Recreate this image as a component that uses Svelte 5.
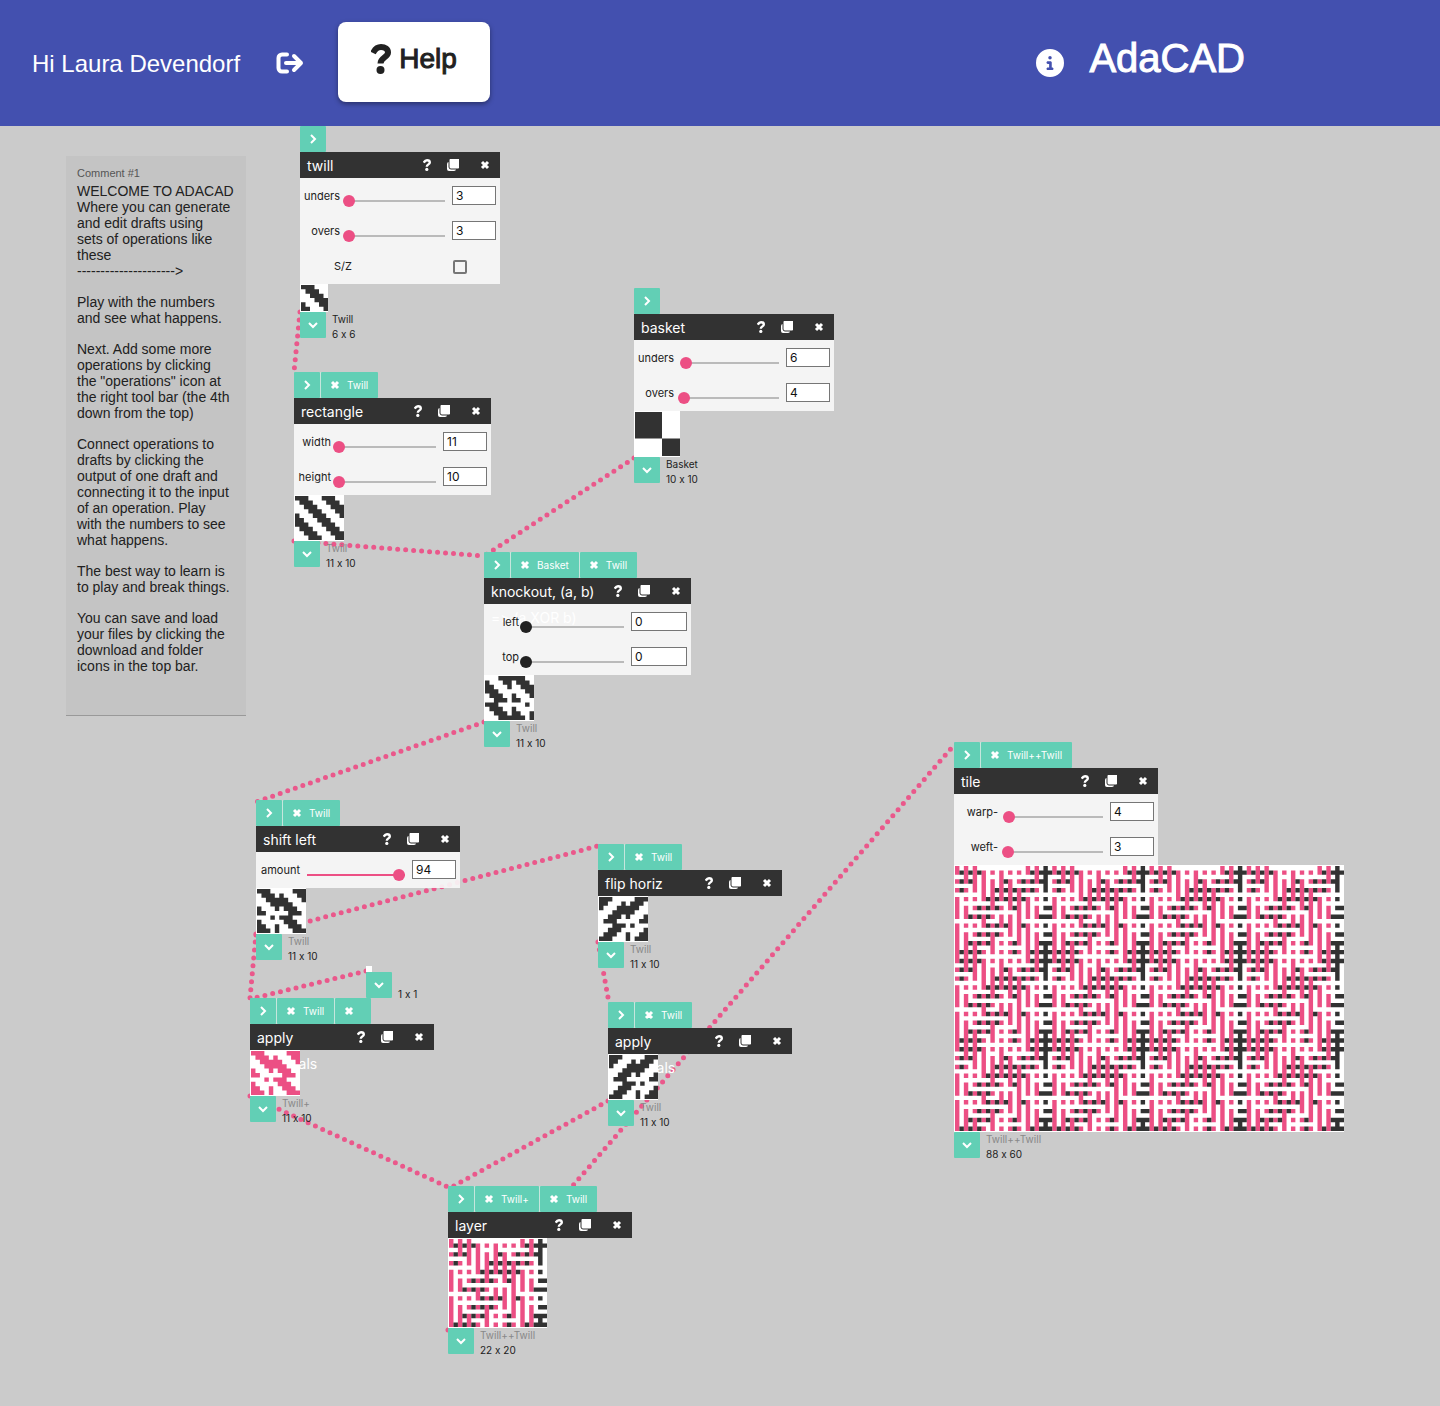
<script>
  const HEADER = 126;
  const CELL = 4.41;
  const DARK = '#323232';
  const PINK = '#ec4f84';
  const WHITE = '#ffffff';

  const grid = (rows, cols, fn) =>
    Array.from({ length: rows }, (_, r) => Array.from({ length: cols }, (_, c) => fn(r, c)));

  // Drafts: each operation transforms the one feeding it.
  const twillAt = (r, c) => (((c - r) % 6) + 6) % 6 < 3;
  const basketAt = (r, c) => c < 10 && c < 6 === r < 6;
  const twill = grid(6, 6, twillAt);
  const rectangle = grid(10, 11, twillAt);
  const basket = grid(10, 10, basketAt);
  const knockout = grid(10, 11, (r, c) => twillAt(r, c) !== basketAt(r, c));
  const shifted = grid(10, 11, (r, c) => knockout[r][(c + 94) % 11]);
  const flipped = grid(10, 11, (r, c) => shifted[r][10 - c]);

  const paint = (draft, colour) => draft.map((row) => row.map((up) => (up ? colour : WHITE)));

  // Two-layer cloth: pink and white warps interlaced with white and dark wefts.
  const layered = grid(20, 22, (r, c) => {
    const top = c % 2 === 0;
    const warp = top ? (c === 20 ? DARK : PINK) : WHITE;
    if (r % 2 === 0) return top && shifted[r / 2][c / 2] ? warp : WHITE;
    if (top) return warp;
    return flipped[(r - 1) / 2][(c - 1) / 2] ? DARK : WHITE;
  });
  const tiled = grid(60, 88, (r, c) => layered[r % 20][c % 22]);

  function runs(cells, colour) {
    let d = '';
    cells.forEach((row, r) => {
      let c = 0;
      while (c < row.length) {
        if (row[c] !== colour) { c++; continue; }
        let end = c;
        while (end < row.length && row[end] === colour) end++;
        d += `M${c} ${r}H${end}V${r + 1}H${c}Z`;
        c = end;
      }
    });
    return d;
  }

  const slider = (label, value, at, wide = false) => ({ label, value, at, wide });

  const nodes = [
    { id: 'twill', x: 300, y: 126, w: 200, title: 'twill', inputs: [], params: [slider('unders', 3, 2), slider('overs', 3, 2)], check: 'S/Z', cells: paint(twill, DARK), name: 'Twill', size: '6 x 6', named: true },
    { id: 'basket', x: 634, y: 288, w: 200, title: 'basket', inputs: [], params: [slider('unders', 6, 5), slider('overs', 4, 3)], cells: paint(basket, DARK), name: 'Basket', size: '10 x 10', named: true },
    { id: 'rectangle', x: 294, y: 372, w: 197, title: 'rectangle', inputs: ['Twill'], params: [slider('width', 11, 1), slider('height', 10, 1)], cells: paint(rectangle, DARK), name: 'Twill', size: '11 x 10' },
    { id: 'knockout', x: 484, y: 552, w: 207, title: 'knockout, (a, b) => (a XOR b)', inputs: ['Basket', 'Twill'], params: [slider('left', 0, 0, true), slider('top', 0, 0, true)], cells: paint(knockout, DARK), name: 'Twill', size: '11 x 10' },
    { id: 'shift', x: 256, y: 800, w: 204, title: 'shift left', inputs: ['Twill'], params: [slider('amount', 94, 94)], cells: paint(shifted, DARK), name: 'Twill', size: '11 x 10' },
    { id: 'flip', x: 598, y: 844, w: 184, title: 'flip horiz', inputs: ['Twill'], params: [], cells: paint(flipped, DARK), name: 'Twill', size: '11 x 10' },
    { id: 'blank', x: 366, y: 966, cells: [[WHITE]], name: '', size: '1 x 1' },
    { id: 'apply-a', x: 250, y: 998, w: 184, title: 'apply materials', inputs: ['Twill', ''], params: [], cells: paint(shifted, PINK), name: 'Twill+', size: '11 x 10' },
    { id: 'apply-b', x: 608, y: 1002, w: 184, title: 'apply materials', inputs: ['Twill'], params: [], cells: paint(flipped, DARK), name: 'Twill', size: '11 x 10' },
    { id: 'layer', x: 448, y: 1186, w: 184, title: 'layer', inputs: ['Twill+', 'Twill'], params: [], cells: layered, name: 'Twill++Twill', size: '22 x 20' },
    { id: 'tile', x: 954, y: 742, w: 204, title: 'tile', inputs: ['Twill++Twill'], params: [slider('warp-', 4, 4), slider('weft-', 3, 3)], cells: tiled, name: 'Twill++Twill', size: '88 x 60' }
  ];

  const links = [
    [300, 312, 294, 372],
    [294, 541, 484, 556],
    [634, 458, 484, 556],
    [484, 722, 256, 802],
    [256, 935, 598, 846],
    [256, 934, 250, 998],
    [366, 971, 250, 999],
    [598, 942, 609, 1003],
    [250, 1096, 450, 1188],
    [608, 1101, 450, 1188],
    [448, 1330, 954, 745]
  ];

  const paragraphs = [
    'WELCOME TO ADACAD\nWhere you can generate\nand edit drafts using\nsets of operations like\nthese\n--------------------->',
    'Play with the numbers\nand see what happens.',
    'Next. Add some more\noperations by clicking\nthe "operations" icon at\nthe right tool bar (the 4th\ndown from the top)',
    'Connect operations to\ndrafts by clicking the\noutput of one draft and\nconnecting it to the input\nof an operation. Play\nwith the numbers to see\nwhat happens.',
    'The best way to learn is\nto play and break things.',
    'You can save and load\nyour files by clicking the\ndownload and folder\nicons in the top bar.'
  ];
</script>

{#snippet question(cls)}
  <svg class={cls} viewBox="0 0 20 30" aria-hidden="true"><path fill="none" stroke="currentColor" stroke-width="6" d="M2 9C4 5 7 3 10 3c4 0 7 2 7 5.500c0 5-7.500 5-7.500 11" /><circle cx="9.500" cy="26" r="4" /></svg>
{/snippet}
{#snippet cross()}
  <svg class="cross" viewBox="0 0 10 10" aria-hidden="true"><path d="M2 2l6 6M8 2l-6 6" /></svg>
{/snippet}

<div class="page">
  <header>
    <span class="greeting">Hi Laura Devendorf</span>
    <button class="bare" aria-label="Sign out">
      <svg class="big" viewBox="0 0 28 22" aria-hidden="true"><path d="M11 2.500H6a3.500 3.500 0 0 0-3.500 3.500v10a3.500 3.500 0 0 0 3.500 3.500h5M10 11h15M18 4l7 7-7 7" /></svg>
    </button>
    <button class="help">{@render question('help-mark')}<span>Help</span></button>
    <button class="bare info" aria-label="About">
      <svg class="round" viewBox="0 0 512 512" aria-hidden="true"><path d="M256 512A256 256 0 1 0 256 0a256 256 0 1 0 0 512zM216 336l24 0 0-64-24 0c-13.300 0-24-10.700-24-24s10.700-24 24-24l48 0c13.300 0 24 10.700 24 24l0 88 8 0c13.300 0 24 10.700 24 24s-10.700 24-24 24l-80 0c-13.300 0-24-10.700-24-24s10.700-24 24-24zm40-208a32 32 0 1 1 0 64 32 32 0 1 1 0-64z" /></svg>
    </button>
    <h1>AdaCAD</h1>
  </header>

  <main>
    <svg class="links" aria-hidden="true">
      {#each links as [x1, y1, x2, y2]}
        <line {x1} y1={y1 - HEADER} {x2} y2={y2 - HEADER} />
      {/each}
    </svg>

    <aside class="comment">
      <div class="caption">Comment #1</div>
      {#each paragraphs as text}
        <p>{text}</p>
      {/each}
    </aside>

    {#each nodes as node (node.id)}
      <section class="node" style:left="{node.x}px" style:top="{node.y - HEADER}px">
        {#if node.title}
          <div class="inlets">
            <button class="port" aria-label="Add input"><svg class="chevron" viewBox="0 0 10 10" aria-hidden="true"><path d="M3 1l4 4-4 4" /></svg></button>
            {#each node.inputs as input}
              <button class="tag" aria-label="Remove input {input}"><span class="x">{@render cross()}</span>{input}</button>
            {/each}
          </div>
          <div class="operation" style:width="{node.w}px">
            <div class="bar">
              <h2>{node.title}</h2>
              <button class="tool" aria-label="Help">{@render question('mark')}</button>
              <button class="tool" aria-label="Duplicate">
                <svg class="copy" viewBox="0 0 12 12" aria-hidden="true"><rect x="0" y="3" width="9" height="9" rx="2" /><rect class="front" x="2" y="-1" width="11" height="11" rx="2" /></svg>
              </button>
              <button class="tool close" aria-label="Delete">{@render cross()}</button>
            </div>
            {#if node.params.length}
              <div class="body">
                {#each node.params as p}
                  {@const id = `${node.id}-${p.label}`}
                  <div class="param">
                    <label for={id}>{p.label}</label>
                    <input type="range" class:zero={p.value === 0} class:full={p.at > 50} min="0" max="100" value={p.at} aria-label="{p.label} slider" />
                    <input type="text" class:wide={p.wide} {id} value={p.value} />
                  </div>
                {/each}
                {#if node.check}
                  <div class="param toggle">
                    <label for="{node.id}-check">{node.check}</label>
                    <input type="checkbox" id="{node.id}-check" />
                  </div>
                {/if}
              </div>
            {/if}
          </div>
        {/if}
        <div class="draft">
          <svg
            viewBox="0 0 {node.cells[0].length} {node.cells.length}"
            preserveAspectRatio="none"
            width={Math.ceil(node.cells[0].length * CELL)}
            height={Math.round(node.cells.length * CELL)}
            aria-hidden="true"
          >
            <path fill={PINK} d={runs(node.cells, PINK)} />
            <path fill={DARK} d={runs(node.cells, DARK)} />
          </svg>
        </div>
        <div class="outlet">
          <button class="port" aria-label="Connect output"><svg class="chevron" viewBox="0 0 10 10" aria-hidden="true"><path d="M1 3l4 4 4-4" /></svg></button>
          <div class="meta">
            <div class="name" class:named={node.named}>{node.name}</div>
            <div>{node.size}</div>
          </div>
        </div>
      </section>
    {/each}
  </main>
</div>

<style>
  :global(body) {
    margin: 0;
    background: #cbcbcb;
  }
  .page {
    min-height: 100vh;
    display: flex;
    flex-direction: column;
    color: #212121;
    font-family: Inter, Roboto, sans-serif;
    font-feature-settings: 'calt' 0;
  }
  button {
    border: 0;
    padding: 0;
    margin: 0;
    background: none;
    color: inherit;
    font: inherit;
    font-feature-settings: inherit;
    cursor: pointer;
  }
  svg {
    display: block;
    fill: currentColor;
  }
  header {
    display: flex;
    align-items: center;
    height: 126px;
    box-sizing: border-box;
    padding: 0 195px 0 32px;
    background: #4350af;
    color: #fff;
    font-family: 'Liberation Sans', Arial, sans-serif;
  }
  .greeting {
    padding-top: 2px;
    font-size: 24px;
    white-space: nowrap;
    margin-right: 36px;
  }
  .big {
    width: 28px;
    height: 22px;
    fill: none;
    stroke: currentColor;
    stroke-width: 4;
    stroke-linecap: round;
    stroke-linejoin: round;
  }
  .round {
    width: 28px;
    height: 28px;
  }
  .help {
    display: flex;
    align-items: center;
    justify-content: center;
    gap: 8px;
    width: 152px;
    height: 80px;
    margin: 0 0 2px 34px;
    padding-bottom: 6px;
    box-sizing: border-box;
    border-radius: 8px;
    background: #fff;
    color: #212121;
    font-size: 28px;
    -webkit-text-stroke: 1px #212121;
    box-shadow: 0 2px 5px rgba(0, 0, 0, 0.4);
  }
  .help :global(.help-mark) {
    width: 20px;
    height: 30px;
  }
  .info {
    margin-left: auto;
  }
  h1 {
    margin: 0 0 0 25px;
    padding-bottom: 10px;
    font-size: 40px;
    font-weight: 400;
    -webkit-text-stroke: 1px #fff;
  }
  main {
    position: relative;
    flex: 1;
    overflow: hidden;
  }
  .links {
    position: absolute;
    inset: 0;
    width: 100%;
    height: 100%;
    stroke: #ea588b;
    stroke-width: 5;
    stroke-linecap: round;
    stroke-dasharray: 0 8;
  }
  .comment {
    position: absolute;
    left: 66px;
    top: 30px;
    width: 180px;
    box-sizing: border-box;
    padding: 9px 8px 41px 11px;
    background: #c4c4c4;
    border-bottom: 1px solid #999;
    font: 14px/16px 'Liberation Sans', Arial, sans-serif;
  }
  .caption {
    font-size: 11px;
    line-height: 16px;
    color: #555;
  }
  p {
    margin: 0 0 15px;
    white-space: pre;
  }
  p:last-child {
    margin: 0;
  }
  .caption + p {
    margin-top: 2px;
  }
  .node {
    position: absolute;
  }
  .inlets {
    display: flex;
    gap: 1px;
  }
  .port,
  .tag {
    display: flex;
    align-items: center;
    height: 26px;
    background: #62cfb5;
    color: #fff;
    border-radius: 1px;
  }
  .port {
    flex: none;
    justify-content: center;
    width: 26px;
  }
  .tag {
    padding-right: 10px;
    font-size: 10px;
    white-space: nowrap;
  }
  .inlets .tag {
    box-shadow: -1px 0 0 #c6e6dd;
  }
  .x {
    display: flex;
    box-sizing: border-box;
    width: 26px;
    padding-left: 2px;
    justify-content: center;
  }
  .cross,
  .chevron {
    width: 10px;
    height: 10px;
    fill: none;
    stroke: currentColor;
    stroke-width: 2;
  }
  .cross {
    stroke-width: 3;
  }
  .bar {
    display: flex;
    height: 26px;
    padding-left: 7px;
    background: #323232;
    color: #fff;
  }
  h2 {
    flex: 1;
    margin: 0;
    min-width: 0;
    padding-top: 1px;
    font-size: 14px;
    font-weight: 400;
    line-height: 26px;
  }
  .tool {
    flex: none;
    display: flex;
    align-items: center;
    justify-content: center;
    width: 26px;
    height: 26px;
  }
  .tool.close {
    width: 30px;
    margin-left: 4px;
  }
  .tool :global(.mark) {
    width: 8px;
    height: 12px;
  }
  .copy {
    width: 12px;
    height: 12px;
  }
  .copy .front {
    stroke: #323232;
    stroke-width: 1;
  }
  .body {
    padding-bottom: 1px;
    background: rgba(247, 247, 247, 0.92);
  }
  .param {
    display: flex;
    align-items: flex-start;
    height: 35px;
    padding-right: 4px;
  }
  label {
    flex: 1;
    min-width: 0;
    padding-right: 1px;
    text-align: right;
    font-size: 11px;
    line-height: 37px;
    white-space: nowrap;
  }
  input {
    margin: 0;
    box-sizing: border-box;
  }
  input[type='text'] {
    flex: none;
    width: 44px;
    height: 19px;
    margin: 8px 0 0 1px;
    padding: 0 3px;
    border: 1px solid #767676;
    background: #fff;
    color: #111;
    font: 12px/17px Inter, Roboto, sans-serif;
  }
  input[type='text'].wide {
    width: 56px;
  }
  input[type='range'] {
    flex: none;
    appearance: none;
    width: 110px;
    height: 12px;
    margin-top: 17px;
    background: linear-gradient(#bababa, #bababa) center / 98px 2px no-repeat;
  }
  input[type='range'].full {
    background-image: linear-gradient(#ec4f84, #ec4f84);
  }
  input[type='range']::-webkit-slider-thumb {
    appearance: none;
    width: 12px;
    height: 12px;
    border-radius: 50%;
    background: #ec4f84;
  }
  input[type='range'].zero::-webkit-slider-thumb {
    background: #212121;
  }
  .toggle label {
    flex: none;
    width: 86px;
    text-align: center;
  }
  .toggle {
    justify-content: space-between;
    padding-right: 33px;
  }
  input[type='checkbox'] {
    appearance: none;
    width: 14px;
    height: 14px;
    margin-top: 12px;
    border: 2px solid #767676;
    border-radius: 2px;
  }
  .draft {
    position: relative;
    width: max-content;
    padding: 1px 0 1px 1px;
    background: #fff;
  }
  .outlet {
    display: flex;
    gap: 6px;
  }
  .meta {
    font-size: 10px;
    line-height: 15px;
    white-space: nowrap;
  }
  .name {
    height: 15px;
    color: #888;
  }
  .name.named {
    color: inherit;
  }
</style>
